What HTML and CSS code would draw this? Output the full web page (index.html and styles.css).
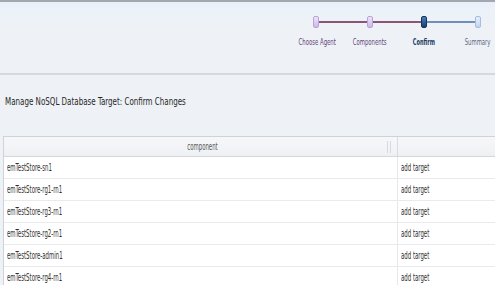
FILE: index.html
```html
<!DOCTYPE html>
<html>
<head>
<meta charset="utf-8">
<link rel="stylesheet" href="styles.css">
</head>
<body>
<div class="page">
  <div class="header">
    <div class="train">
      <div class="nodes">
        <div class="node done"></div>
        <div class="link purple"></div>
        <div class="node done"></div>
        <div class="link purple"></div>
        <div class="node current"></div>
        <div class="link blue"></div>
        <div class="node next"></div>
      </div>
      <div class="labels">
        <div class="label done"><span class="sq">Choose Agent</span></div>
        <div class="label done"><span class="sq">Components</span></div>
        <div class="label current"><span class="sq">Confirm</span></div>
        <div class="label next"><span class="sq">Summary</span></div>
      </div>
    </div>
  </div>
  <div class="content">
    <h1 class="title"><span class="sq">Manage NoSQL Database Target: Confirm Changes</span></h1>
    <div class="table">
      <div class="row head">
        <div class="cell c1"><span class="sq mid">component</span><span class="grip"></span></div>
        <div class="cell c2"></div>
      </div>
      <div class="row"><div class="cell c1"><span class="sq">emTestStore-sn1</span></div><div class="cell c2"><span class="sq">add target</span></div></div>
      <div class="row"><div class="cell c1"><span class="sq">emTestStore-rg1-rn1</span></div><div class="cell c2"><span class="sq">add target</span></div></div>
      <div class="row"><div class="cell c1"><span class="sq">emTestStore-rg3-rn1</span></div><div class="cell c2"><span class="sq">add target</span></div></div>
      <div class="row"><div class="cell c1"><span class="sq">emTestStore-rg2-rn1</span></div><div class="cell c2"><span class="sq">add target</span></div></div>
      <div class="row"><div class="cell c1"><span class="sq">emTestStore-admin1</span></div><div class="cell c2"><span class="sq">add target</span></div></div>
      <div class="row"><div class="cell c1"><span class="sq">emTestStore-rg4-rn1</span></div><div class="cell c2"><span class="sq">add target</span></div></div>
    </div>
  </div>
</div>
</body>
</html>
```
FILE: styles.css
```css
html, body {
  margin: 0;
  padding: 0;
}
body {
  width: 495px;
  height: 285px;
  overflow: hidden;
  background: #eef2f7;
  font-family: "DejaVu Sans Condensed", "DejaVu Sans", sans-serif;
  color: #333;
}
.sq {
  display: inline-block;
  white-space: nowrap;
  transform-origin: left center;
}
.page {
  border-top: 2px solid #a3a7ae;
}
.header {
  height: 71px;
  background: linear-gradient(#eaf0fb, #eef2f7 30%);
  border-bottom: 2px solid #d5d9de;
}
.train {
  padding-top: 14px;
}
.nodes {
  display: flex;
  align-items: center;
  padding-left: 313px;
  height: 12px;
}
.node {
  width: 6px;
  height: 12px;
  border-radius: 2px;
  box-sizing: border-box;
  flex: none;
}
.node.done {
  background: linear-gradient(#eee4f8, #cdb8e6);
  border: 1px solid #b9a3d8;
}
.node.current {
  background: linear-gradient(#4a7fbb, #173f70);
  border: 1px solid #12335e;
}
.node.next {
  background: linear-gradient(#e6eefb, #c2d5ef);
  border: 1px solid #a5bde0;
}
.link {
  width: 48px;
  height: 2px;
  flex: none;
}
.link.purple {
  background: #8c5577;
}
.link.blue {
  background: #6f8fbd;
}
.labels {
  display: grid;
  grid-template-columns: repeat(4, 54px);
  padding-left: 289px;
  margin-top: 8px;
}
.label {
  text-align: center;
  font-size: 9px;
  height: 12px;
  line-height: 12px;
  color: #5e4276;
}
.label .sq {
  transform: scaleX(0.66);
  transform-origin: center center;
}
.label.current {
  color: #1b3a64;
  font-weight: bold;
}
.label.current .sq {
  transform: scaleX(0.62);
}
.label.next {
  color: #5a6880;
}
.content {
  padding: 20px 0 0 3px;
}
.title {
  margin: 0 0 27px 2px;
  font-size: 11px;
  font-weight: normal;
  color: #262626;
  height: 14px;
  line-height: 14px;
}
.title .sq {
  transform: scaleX(0.72);
}
.table {
  border: 1px solid #cfd3d8;
  border-right: none;
  background: #fff;
}
.row {
  display: flex;
  height: 22px;
  border-bottom: 1px solid #e8eaed;
  box-sizing: border-box;
}
.row.head {
  height: 20px;
  background: linear-gradient(#f6f7f9, #eef1f4);
  border-bottom: 1px solid #d4d8dd;
}
.cell {
  font-size: 10px;
  color: #2e2e2e;
  display: flex;
  align-items: center;
  padding-left: 3px;
  box-sizing: border-box;
}
.cell .sq {
  transform: scaleX(0.6);
}
.c1 {
  width: 394px;
  border-right: 1px solid #e6e8eb;
}
.c2 {
  flex: 1;
}
.head .c1 {
  justify-content: center;
  position: relative;
  color: #555;
  border-right: 1px solid #d8dce0;
}
.cell .sq.mid {
  transform-origin: center center;
}
.grip {
  position: absolute;
  right: 6px;
  top: 4px;
  width: 2px;
  height: 12px;
  border-left: 1px solid #d6dadf;
  border-right: 1px solid #d6dadf;
}
```
